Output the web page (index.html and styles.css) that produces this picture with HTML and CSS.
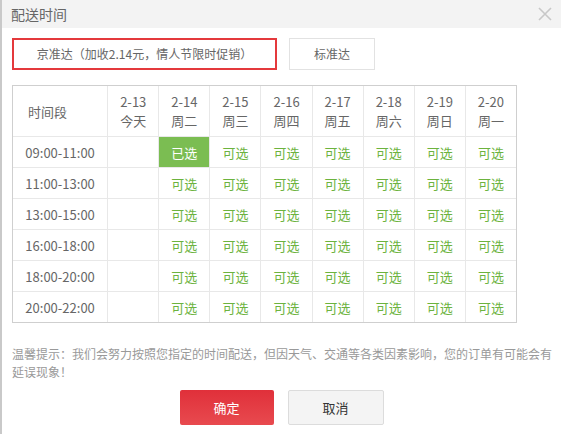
FILE: index.html
```html
<!DOCTYPE html>
<html lang="zh-CN">
<head>
<meta charset="utf-8">
<title>配送时间</title>
<link rel="stylesheet" href="styles.css">
</head>
<body>
<div class="page">
  <div class="backdrop"></div>
  <div class="dialog">
    <div class="dialog-header">
      <span class="dialog-title">配送时间</span>
      <svg class="close" width="14" height="14" viewBox="0 0 14 14"><path d="M1 1L13 13M13 1L1 13" stroke="#c8c8c8" stroke-width="1.6" fill="none"/></svg>
    </div>
    <div class="tabs">
      <div class="tab tab-active">京准达（加收2.14元，情人节限时促销）</div>
      <div class="tab">标准达</div>
    </div>
    <table class="slots">
      <thead>
        <tr>
          <th class="col-time">时间段</th>
          <th>2-13<br>今天</th>
          <th>2-14<br>周二</th>
          <th>2-15<br>周三</th>
          <th>2-16<br>周四</th>
          <th>2-17<br>周五</th>
          <th>2-18<br>周六</th>
          <th>2-19<br>周日</th>
          <th>2-20<br>周一</th>
        </tr>
      </thead>
      <tbody>
        <tr><td class="time">09:00-11:00</td><td></td><td class="sel">已选</td><td class="ok">可选</td><td class="ok">可选</td><td class="ok">可选</td><td class="ok">可选</td><td class="ok">可选</td><td class="ok">可选</td></tr>
        <tr><td class="time">11:00-13:00</td><td></td><td class="ok">可选</td><td class="ok">可选</td><td class="ok">可选</td><td class="ok">可选</td><td class="ok">可选</td><td class="ok">可选</td><td class="ok">可选</td></tr>
        <tr><td class="time">13:00-15:00</td><td></td><td class="ok">可选</td><td class="ok">可选</td><td class="ok">可选</td><td class="ok">可选</td><td class="ok">可选</td><td class="ok">可选</td><td class="ok">可选</td></tr>
        <tr><td class="time">16:00-18:00</td><td></td><td class="ok">可选</td><td class="ok">可选</td><td class="ok">可选</td><td class="ok">可选</td><td class="ok">可选</td><td class="ok">可选</td><td class="ok">可选</td></tr>
        <tr><td class="time">18:00-20:00</td><td></td><td class="ok">可选</td><td class="ok">可选</td><td class="ok">可选</td><td class="ok">可选</td><td class="ok">可选</td><td class="ok">可选</td><td class="ok">可选</td></tr>
        <tr><td class="time">20:00-22:00</td><td></td><td class="ok">可选</td><td class="ok">可选</td><td class="ok">可选</td><td class="ok">可选</td><td class="ok">可选</td><td class="ok">可选</td><td class="ok">可选</td></tr>
      </tbody>
    </table>
    <p class="tip">温馨提示：我们会努力按照您指定的时间配送，但因天气、交通等各类因素影响，您的订单有可能会有延误现象！</p>
    <div class="actions">
      <button class="btn btn-primary">确定</button>
      <button class="btn btn-default">取消</button>
    </div>
  </div>
</div>
</body>
</html>
```

FILE: styles.css
```css
html, body {
  margin: 0;
  padding: 0;
  background: #fff;
}
body {
  font-family: "Noto Sans CJK SC", "Microsoft YaHei", sans-serif;
  font-size: 12px;
  color: #666;
}
.page {
  display: flex;
  width: 561px;
  height: 434px;
  overflow: hidden;
}
.backdrop {
  width: 2px;
  flex: none;
  background: #c9c9c9;
}
.dialog {
  flex: 1;
  background: #fff;
}
.dialog-header {
  height: 28px;
  background: #f3f3f3;
  display: flex;
  align-items: center;
  justify-content: space-between;
  padding: 0 9px 0 9px;
}
.dialog-title {
  font-size: 14px;
  color: #666;
  line-height: 28px;
}
.close {
  display: block;
  margin-top: -1px;
}
.tabs {
  display: flex;
  gap: 12px;
  padding: 10px 0 0 10px;
}
.tab {
  box-sizing: border-box;
  height: 32px;
  line-height: 30px;
  border: 1px solid #e2e2e2;
  text-align: center;
  width: 86px;
  color: #666;
}
.tab-active {
  width: 265px;
  border: 2px solid #e4393c;
  line-height: 28px;
}
.slots {
  margin: 15px 0 0 10px;
  border: 1px solid #cfcfcf;
  border-spacing: 0;
  border-collapse: separate;
  table-layout: fixed;
  width: 505px;
}
.slots th, .slots td {
  border-right: 1px solid #e8e8e8;
  border-bottom: 1px solid #e8e8e8;
  text-align: center;
  padding: 0;
  font-weight: normal;
  width: 50px;
}
.slots tr > :last-child {
  border-right: none;
}
.slots tbody tr:last-child td {
  border-bottom: none;
}
.slots th {
  height: 50px;
  line-height: 19px;
  color: #666;
  font-size: 13px;
}
.slots th.col-time {
  width: 79px;
  text-align: left;
  padding-left: 15px;
}
.slots td {
  height: 30px;
  font-size: 13px;
}
.slots td.time {
  color: #666;
}
.slots td.ok {
  color: #6cb33e;
}
.slots td.sel {
  background: #7bbd52;
  color: #fff;
}
.tip {
  margin: 22px 0 0 10px;
  width: 541px;
  line-height: 18px;
  color: #999;
}
.actions {
  display: flex;
  justify-content: center;
  gap: 14px;
  margin-top: 9px;
}
.btn {
  width: 94px;
  height: 35px;
  border-radius: 2px;
  font-family: inherit;
  font-size: 13px;
  padding: 0;
}
.btn-primary {
  border: none;
  background: linear-gradient(#e0303a, #e84a4f);
  color: #fff;
}
.btn-default {
  border: 1px solid #dcdcdc;
  background: #f4f4f4;
  color: #333;
  width: 96px;
}
```
